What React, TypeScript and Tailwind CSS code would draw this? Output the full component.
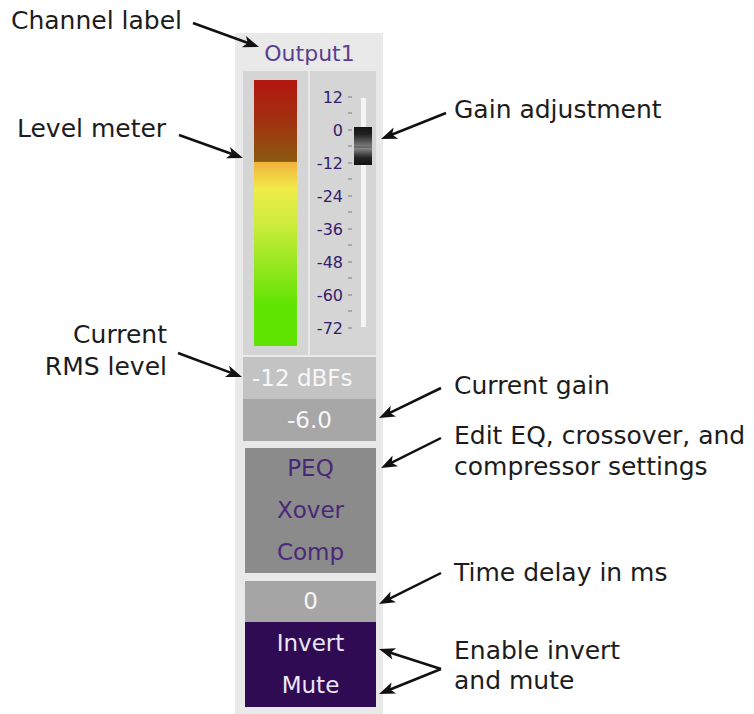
import React from 'react';

type Arrow = { x1: number; y1: number; x2: number; y2: number };

const arrows: Arrow[] = [
  { x1: 193, y1: 23, x2: 259, y2: 47 },
  { x1: 179, y1: 135, x2: 243, y2: 158 },
  { x1: 178, y1: 353, x2: 242, y2: 377 },
  { x1: 446, y1: 113, x2: 381, y2: 139 },
  { x1: 441, y1: 388, x2: 379, y2: 418 },
  { x1: 441, y1: 438, x2: 381, y2: 468 },
  { x1: 441, y1: 573, x2: 379, y2: 604 },
  { x1: 441, y1: 669, x2: 379, y2: 649 },
  { x1: 441, y1: 669, x2: 379, y2: 694 },
];

const ArrowShape = ({ a }: { a: Arrow }) => {
  const dx = a.x2 - a.x1;
  const dy = a.y2 - a.y1;
  const len = Math.hypot(dx, dy);
  const ux = dx / len;
  const uy = dy / len;
  const head = 16;
  const half = 6;
  const bx = a.x2 - ux * head;
  const by = a.y2 - uy * head;
  const pts = [
    `${a.x2},${a.y2}`,
    `${bx - uy * half},${by + ux * half}`,
    `${a.x2 - ux * (head - 4)},${a.y2 - uy * (head - 4)}`,
    `${bx + uy * half},${by - ux * half}`,
  ].join(' ');
  return (
    <g>
      <line x1={a.x1} y1={a.y1} x2={a.x2 - ux * 8} y2={a.y2 - uy * 8} stroke="#111" strokeWidth={2.5} />
      <polygon points={pts} fill="#111" />
    </g>
  );
};

const scale = ['12', '0', '-12', '-24', '-36', '-48', '-60', '-72'];

const Ruler = () => (
  <div className="flex flex-col pt-[10px]">
    {scale.map((v, i) => (
      <div key={v} className="flex h-[33px] items-stretch">
        <div className="flex w-[33px] items-center justify-end text-[16px] leading-none text-[#33206c]">{v}</div>
        <div className="ml-[5px] flex w-[4px] flex-col">
          <div className="flex-1" />
          <div className="h-[2px] bg-[#a8a8a8]" />
          <div className="flex-1" />
          <div className={i < scale.length - 1 ? 'h-[2px] bg-[#a8a8a8]' : 'h-[2px]'} />
        </div>
      </div>
    ))}
  </div>
);

const Slider = () => (
  <div className="ml-[2px] flex w-[18px] justify-center pt-[27px]">
    <div className="relative h-[229px] w-[5px] bg-[#f4f4f4]">
      <div className="absolute left-[-7px] top-[29px] flex w-[18px] flex-col gap-[2px] bg-[#6a6a6a]">
        <div className="h-[19px] bg-[linear-gradient(to_bottom,#141414,#222222_40%,#7a7a7a)]" />
        <div className="h-[17px] bg-[linear-gradient(to_bottom,#8a8a8a,#262626_55%,#101010)]" />
      </div>
    </div>
  </div>
);

const Cell = ({ children, className }: { children: React.ReactNode; className: string }) => (
  <div className={`flex items-center justify-center text-[23px] leading-none ${className}`}>{children}</div>
);

const Strip = () => (
  <div className="ml-[235px] mt-[33px] flex h-[681px] w-[148px] flex-col bg-[#e9e9e9] pl-[8px] pr-[7px]">
    <div className="flex h-[38px] items-center justify-center pt-[2px] text-[22px] text-[#5c3e8e]">Output1</div>

    <div className="flex h-[284px] gap-[2px]">
      <div className="w-[65px] bg-[#d5d5d5] pl-[11px] pt-[9px]">
        <div className="h-[266px] w-[43px] bg-[linear-gradient(to_bottom,#b3160f_0%,#a2300f_15%,#8b5a0f_30.6%,#f3b23c_31%,#f0ec4a_41%,#c9ec3a_55%,#8ee61a_72%,#5fe500_85%,#5ee400_100%)]" />
      </div>
      <div className="flex flex-1 bg-[#d5d5d5]">
        <Ruler />
        <Slider />
      </div>
    </div>

    <div className="mt-[2px] flex h-[42px] items-center bg-[#c3c3c3] pl-[9px] text-[23px] leading-none text-[#f7f7f7]">-12 dBFs</div>
    <Cell className="h-[42px] bg-[#a7a7a7] text-[#f7f7f7]">-6.0</Cell>

    <div className="ml-[2px] mt-[7px] flex h-[125px] flex-col bg-[#8b8b8b] text-[#4a2878]">
      <Cell className="flex-1">PEQ</Cell>
      <Cell className="flex-1">Xover</Cell>
      <Cell className="flex-1">Comp</Cell>
    </div>

    <div className="ml-[2px] mt-[8px] flex flex-col">
      <Cell className="h-[41px] bg-[#a5a5a5] text-[#f7f7f7]">0</Cell>
      <Cell className="h-[42px] bg-[#2f0b54] text-[#ece6f4]">Invert</Cell>
      <Cell className="h-[43px] bg-[#2f0b54] text-[#ece6f4]">Mute</Cell>
    </div>
  </div>
);

export default function App() {
  return (
    <div className="relative h-[714px] w-[754px] overflow-hidden bg-white font-['DejaVu_Sans',sans-serif]">
      <Strip />

      <div className="absolute inset-0 text-[25px] leading-[30px] text-[#1c1c1c]">
        <div className="absolute left-[11px] top-[6px]">Channel label</div>
        <div className="absolute left-[17px] top-[114px]">Level meter</div>
        <div className="absolute left-0 top-[319px] w-[167px] text-right leading-[32px]">
          Current
          <br />
          RMS level
        </div>
        <div className="absolute left-[454px] top-[95px]">Gain adjustment</div>
        <div className="absolute left-[454px] top-[371px]">Current gain</div>
        <div className="absolute left-[454px] top-[420px] leading-[31px]">
          Edit EQ, crossover, and
          <br />
          compressor settings
        </div>
        <div className="absolute left-[454px] top-[558px]">Time delay in ms</div>
        <div className="absolute left-[454px] top-[636px]">
          Enable invert
          <br />
          and mute
        </div>
      </div>

      <svg className="pointer-events-none absolute inset-0" width={754} height={714}>
        {arrows.map((a, i) => (
          <ArrowShape key={i} a={a} />
        ))}
      </svg>
    </div>
  );
}
